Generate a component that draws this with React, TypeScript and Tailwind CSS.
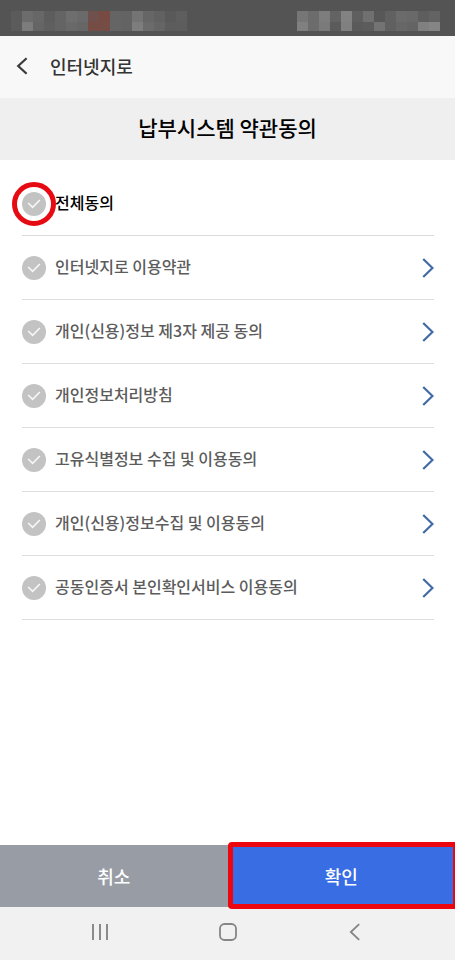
import { useState } from "react";

const terms = [
  "인터넷지로 이용약관",
  "개인(신용)정보 제3자 제공 동의",
  "개인정보처리방침",
  "고유식별정보 수집 및 이용동의",
  "개인(신용)정보수집 및 이용동의",
  "공동인증서 본인확인서비스 이용동의",
];

const leftMosaic = [
  ["#5b5b5b", "#6c6c6c", "#676767", "#5d5d5d", "#646464", "#6e6e6e", "#6a6a6a", "#70504c", "#774a42", "#646464", "#636363", "#747474", "#666666", "#616161", "#595959", "#5e5e5e"],
  ["#5b5b5b", "#7c7c7c", "#656565", "#5f5f5f", "#646464", "#696969", "#666666", "#764d45", "#764d45", "#656565", "#636363", "#7d7d7d", "#6b6b6b", "#656565", "#5c5c5c", "#5d5d5d"],
];

const rightMosaic = [
  ["#767676", "#6c6c6c", "#7d7d7d", "#636363", "#828282", "#5f5f5f", "#707070", "#575757", "#616161", "#6b6b6b", "#696969", "#5e5e5e", "#636363"],
  ["#808080", "#6c6c6c", "#7a7a7a", "#5b5b5b", "#808080", "#5a5a5a", "#5c5c5c", "#737373", "#606060", "#676767", "#646464", "#808080", "#858585"],
];

function Mosaic({ rows }: { rows: string[][] }) {
  return (
    <div aria-hidden="true">
      {rows.map((row, r) => (
        <div key={r} className={r === 0 ? "flex h-[11px]" : "flex h-[9px]"}>
          {row.map((color, c) => (
            <span key={c} className="w-[11px]" style={{ backgroundColor: color }} />
          ))}
        </div>
      ))}
    </div>
  );
}

function Consent({ label, checked, onChange, strong, marked }: {
  label: string;
  checked: boolean;
  onChange: () => void;
  strong?: boolean;
  marked?: boolean;
}) {
  return (
    <label className="flex items-center gap-[9px]">
      <span className="relative grid size-6 shrink-0 place-items-center">
        <input
          type="checkbox"
          checked={checked}
          onChange={onChange}
          className="col-start-1 row-start-1 size-6 appearance-none rounded-full bg-[#c3c3c3] checked:bg-[#386de3]"
        />
        <svg viewBox="0 0 24 24" className="pointer-events-none col-start-1 row-start-1 size-6" fill="none" stroke="#f6f6f6" strokeWidth="1.7">
          <path d="M6.2 11 10.6 15.3 17.8 8" />
        </svg>
        {marked && (
          <span className="pointer-events-none absolute -inset-[10px] rounded-full border-[5px] border-[#e60a12]" />
        )}
      </span>
      <span className={strong ? "pb-1 text-base font-medium text-black" : "pb-1 text-base font-medium text-[#5c5c5c]"}>
        {label}
      </span>
    </label>
  );
}

export default function App() {
  const [agreed, setAgreed] = useState<boolean[]>(terms.map(() => false));
  const all = agreed.every(Boolean);

  return (
    <div className="flex min-h-screen flex-col bg-white font-['Noto_Sans_CJK_KR',sans-serif]">
      <div className="flex h-9 items-start justify-between bg-[#545454] pt-[11px] pr-[15px] pl-[11px]">
        <Mosaic rows={leftMosaic} />
        <Mosaic rows={rightMosaic} />
      </div>

      <header className="flex h-[62px] items-center gap-[22px] bg-[#f8f8f8] pb-0.5 pl-4">
        <button type="button" aria-label="뒤로">
          <svg viewBox="0 0 12 18" className="h-[18px] w-3" fill="none" stroke="#3a3a3a" strokeWidth="2.2">
            <path d="M10.6 1.2 2.2 9l8.4 7.8" />
          </svg>
        </button>
        <span className="text-lg font-medium text-[#333333]">인터넷지로</span>
      </header>

      <h1 className="flex h-[62px] items-center justify-center bg-[#efefef] pb-0.5 text-[21px] font-medium text-black">
        납부시스템 약관동의
      </h1>

      <main className="flex-1 pt-3 pr-[21px] pl-[22px]">
        <ul>
          <li className="flex h-16 items-center border-b border-[#d9d9d9]">
            <Consent label="전체동의" checked={all} onChange={() => setAgreed(terms.map(() => !all))} strong marked />
          </li>
          {terms.map((term, i) => (
            <li key={term} className="flex h-16 items-center justify-between border-b border-[#dedede]">
              <Consent
                label={term}
                checked={agreed[i]}
                onChange={() => setAgreed(agreed.map((v, j) => (j === i ? !v : v)))}
              />
              <button type="button" aria-label={`${term} 보기`}>
                <svg viewBox="0 0 12 20" className="h-5 w-3" fill="none" stroke="#4169a8" strokeWidth="2.2">
                  <path d="M1.2 1 10.5 10 1.2 19" />
                </svg>
              </button>
            </li>
          ))}
        </ul>
      </main>

      <div className="grid h-[62px] grid-cols-2 text-lg font-medium text-white">
        <button type="button" className="bg-[#989ca5]">취소</button>
        <div className="relative grid">
          <button type="button" className="bg-[#386de3]">확인</button>
          <span className="pointer-events-none absolute -top-[3px] right-0 -bottom-0.5 left-0 rounded-l-sm border-[5px] border-r-2 border-[#ec0610]" />
        </div>
      </div>

      <nav className="grid h-[53px] grid-cols-[1fr_auto_1fr] items-center bg-[#f1f1f1] px-[91px] pb-[3px]">
        <button type="button" aria-label="최근 앱" className="justify-self-start">
          <svg viewBox="0 0 18 18" className="size-[18px]" fill="none" stroke="#8a8a8a" strokeWidth="2">
            <path d="M2 1v16M9 1v16M16 1v16" />
          </svg>
        </button>
        <button type="button" aria-label="홈">
          <svg viewBox="0 0 18 18" className="size-[18px]" fill="none" stroke="#858585" strokeWidth="1.8">
            <rect x="1" y="1" width="16" height="16" rx="4.5" />
          </svg>
        </button>
        <button type="button" aria-label="뒤로 가기" className="justify-self-end">
          <svg viewBox="0 0 18 18" className="size-[18px]" fill="none" stroke="#858585" strokeWidth="1.8">
            <path d="M13.2 1.2 4.8 9l8.4 7.8" />
          </svg>
        </button>
      </nav>
    </div>
  );
}
